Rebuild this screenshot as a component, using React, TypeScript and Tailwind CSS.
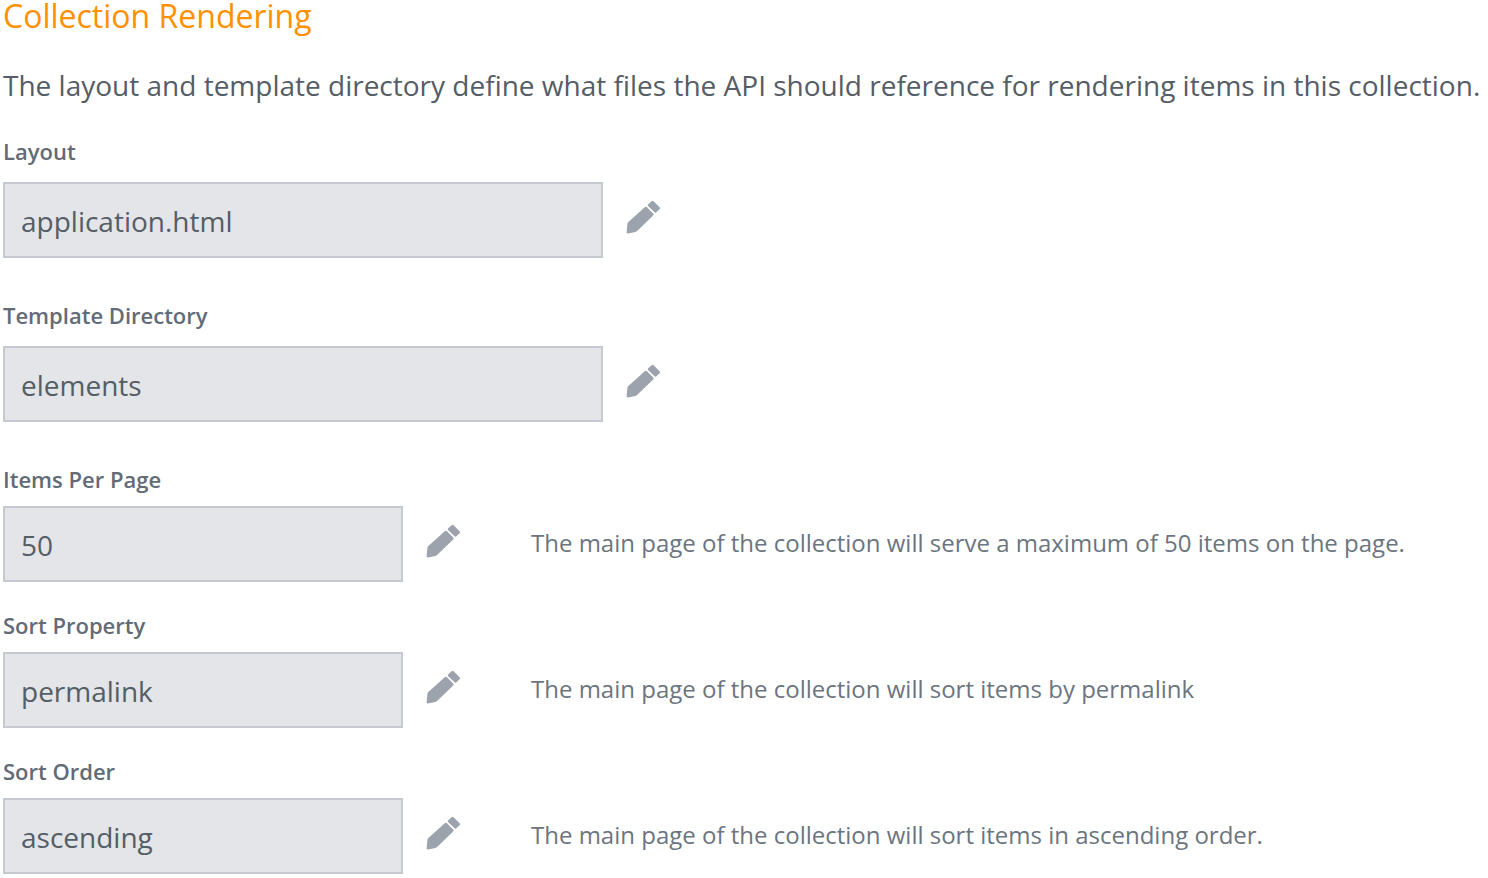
import React from "react";

type FieldProps = {
  id: string;
  label: string;
  value: string;
  wide?: boolean;
  note?: string;
};

function Pencil() {
  return (
    <svg viewBox="0 0 36 36" className="size-9 fill-[#9ca3ad]" aria-hidden="true">
      <path d="M1.6 33.6 L2.4 24.8 Q2.6 23.9 3.4 23.1 L20 7.9 Q20.9 7.3 21.7 8.1 L28.2 14.6 Q29 15.5 28.2 16.4 L12.3 31.8 Q11.4 32.7 10.4 32.9 L2.8 34.4 Q1.6 34.6 1.6 33.6 Z" />
      <path d="M23 5.6 L26.6 2.2 Q27.6 1.4 28.6 2.2 L34.8 8.4 Q35.6 9.2 34.8 10 L31.2 13.4 Q30.3 14 29.6 13.3 L23 6.9 Q22.4 6.2 23 5.6 Z" />
    </svg>
  );
}

function Field({ id, label, value, wide, note }: FieldProps) {
  return (
    <div className={wide ? "mb-[39px]" : "mb-[25px] last:mb-0"}>
      <label
        htmlFor={id}
        className={
          wide
            ? "mb-[13px] block text-[22px] leading-9 font-semibold text-[#626b76]"
            : "mb-[9px] block text-[22px] leading-9 font-semibold text-[#626b76]"
        }
      >
        {label}
      </label>
      <div className="flex items-center">
        <input
          id={id}
          readOnly
          defaultValue={value}
          className={
            wide
              ? "h-19 w-[600px] border-2 border-[#c6cad0] bg-[#e3e5e8] px-4 pt-0.5 text-[28px] text-[#555d66] outline-none"
              : "h-19 w-[400px] border-2 border-[#c6cad0] bg-[#e3e5e8] px-4 pt-0.5 text-[28px] text-[#555d66] outline-none"
          }
        />
        <button type="button" aria-label={`Edit ${label}`} className="ml-[22px] pb-1.5">
          <Pencil />
        </button>
        {note && <p className="ml-[70px] pb-0.5 text-[24px] leading-8 text-[#6b7580]">{note}</p>}
      </div>
    </div>
  );
}

export default function App() {
  return (
    <main className="bg-white pl-[3px] font-['Open_Sans',sans-serif]">
      <h1 className="text-[32px] leading-8 text-[#ff9100]">Collection Rendering</h1>
      <p className="mt-[31px] mb-[26px] text-[28px] leading-11 text-[#555d66]">
        The layout and template directory define what files the API should reference for rendering items in this collection.
      </p>
      <Field id="layout" label="Layout" value="application.html" wide />
      <Field id="directory" label="Template Directory" value="elements" wide />
      <Field id="per-page" label="Items Per Page" value="50" note="The main page of the collection will serve a maximum of 50 items on the page." />
      <Field id="sort-property" label="Sort Property" value="permalink" note="The main page of the collection will sort items by permalink" />
      <Field id="sort-order" label="Sort Order" value="ascending" note="The main page of the collection will sort items in ascending order." />
    </main>
  );
}
